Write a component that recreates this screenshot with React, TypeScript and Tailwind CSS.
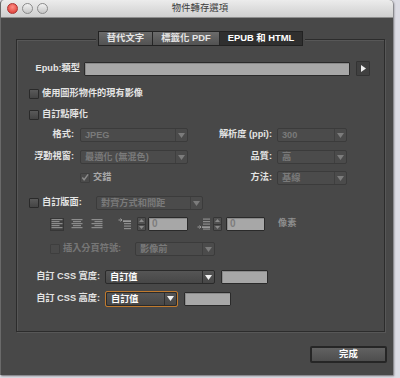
import React from 'react';

const Arrow = ({ light }: { light?: boolean }) => (
  <svg width="7" height="5" viewBox="0 0 7 5">
    <path d="M0 0h7L3.5 5z" fill={light ? '#f2f2f2' : '#7c7c7c'} />
  </svg>
);

interface SelectProps {
  className: string;
  value: string;
  disabled?: boolean;
}

const Select: React.FC<SelectProps> = ({ className, value, disabled = true }) => (
  <div
    className={`${className} h-[14px] flex items-stretch rounded-[2px] border ${
      disabled ? 'border-[#3b3b3b] bg-[#4b4b4b]' : 'border-[#2a2a2a] bg-gradient-to-b from-[#555] to-[#474747]'
    }`}
  >
    <span className={`flex-1 pl-[4px] leading-[12px] whitespace-nowrap overflow-hidden ${disabled ? 'text-[#7a7a7a]' : 'text-white'}`}>
      {value}
    </span>
    <span className={`w-[12px] border-l flex items-center justify-center ${disabled ? 'border-[#3f3f3f]' : 'border-[#2e2e2e]'}`}>
      <Arrow light={!disabled} />
    </span>
  </div>
);

const Field = ({ className, value }: { className: string; value?: string }) => (
  <div className={`${className} h-[14px] bg-[#a7a7a7] border border-[#2a2a2a] rounded-[1px] shadow-[inset_1px_1px_0_#8a8a8a] pl-[3px] leading-[12px] text-[#7d7d7d] text-[10px]`}>
    {value}
  </div>
);

const Checkbox = ({ checked, disabled }: { checked?: boolean; disabled?: boolean }) => (
  <div
    className={`w-[10px] h-[10px] shrink-0 rounded-[1px] border flex items-center justify-center ${
      disabled ? 'border-[#3e3e3e] bg-[#4a4a4a]' : 'border-[#2a2a2a] bg-gradient-to-b from-[#5a5a5a] to-[#444]'
    }`}
  >
    {checked && (
      <svg width="9" height="9" viewBox="0 0 9 9">
        <path d="M1.5 4.5l2 2.5L8 1" stroke="#8a8a8a" strokeWidth="1.6" fill="none" />
      </svg>
    )}
  </div>
);

const AlignIcon = ({ kind, selected }: { kind: 'left' | 'center' | 'right'; selected?: boolean }) => {
  const rows = [0, 1, 2, 3, 4];
  return (
    <div className={`w-[14px] h-[13px] flex items-center justify-center ${selected ? 'bg-[#404040] border border-[#363636]' : ''}`}>
      <svg width="12" height="10" viewBox="0 0 12 10">
        {rows.map(i => {
          const w = i % 2 === 0 ? 11 : 8;
          const x = kind === 'left' ? 0.5 : kind === 'center' ? (12 - w) / 2 : 11.5 - w;
          return <rect key={i} x={x} y={i * 2} width={w} height="1.2" fill="#8c8c8c" />;
        })}
      </svg>
    </div>
  );
};

const SpaceIcon = ({ below }: { below?: boolean }) => (
  <div className="w-[14px] h-[13px] flex items-center justify-center">
    <svg width="14" height="12" viewBox="0 0 14 12">
      {below ? (
        <>
          <path d="M0.5 9h3M2.5 7.5l1.5 1.5-1.5 1.5" stroke="#9a9a9a" strokeWidth="1" fill="none" />
          <rect x="6" y="0.5" width="7" height="1.2" fill="#8c8c8c" />
          <rect x="6" y="3" width="7" height="1.2" fill="#8c8c8c" />
          <rect x="6" y="5.5" width="7" height="1.2" fill="#8c8c8c" />
          <rect x="5" y="8.5" width="8" height="1.2" fill="#bcbcbc" />
          <rect x="6" y="10.5" width="7" height="1.2" fill="#8c8c8c" />
        </>
      ) : (
        <>
          <path d="M0.5 2h3M2.5 0.5l1.5 1.5-1.5 1.5" stroke="#9a9a9a" strokeWidth="1" fill="none" />
          <rect x="5" y="2.5" width="8" height="1.2" fill="#bcbcbc" />
          <rect x="6" y="5" width="7" height="1.2" fill="#8c8c8c" />
          <rect x="6" y="7.5" width="7" height="1.2" fill="#8c8c8c" />
          <rect x="6" y="10" width="7" height="1.2" fill="#8c8c8c" />
        </>
      )}
    </svg>
  </div>
);

const Stepper = ({ className }: { className: string }) => (
  <div className={`${className} h-[14px] flex flex-col border border-[#363636] rounded-[1px]`}>
    <div className="flex-1 flex items-center justify-center bg-[#505050] border-b border-[#363636]">
      <svg width="5" height="3" viewBox="0 0 5 3"><path d="M0 3h5L2.5 0z" fill="#8a8a8a" /></svg>
    </div>
    <div className="flex-1 flex items-center justify-center bg-[#505050]">
      <svg width="5" height="3" viewBox="0 0 5 3"><path d="M0 0h5L2.5 3z" fill="#8a8a8a" /></svg>
    </div>
  </div>
);

const Tab = ({ label, active }: { label: string; active?: boolean }) => (
  <div
    className={`h-full flex items-center justify-center px-[8px] border-r border-[#262626] last:border-r-0 ${
      active ? 'bg-[#2f2f2f] text-white' : 'bg-gradient-to-b from-[#6b6b6b] to-[#525252] text-[#e6e6e6]'
    }`}
  >
    {label}
  </div>
);

const Light = ({ color }: { color: string }) => (
  <div className={`w-[11px] h-[11px] rounded-full border border-[#8a8a8a] ${color}`} />
);

export default function App() {
  return (
    <div className="w-[400px] h-[378px] bg-[#dcdce4] overflow-hidden font-['Liberation_Sans','Noto_Sans_CJK_TC',sans-serif] text-[9.2px] font-bold text-[#e4e4e4]">
      <div className="w-[393px] h-[375px] bg-[#484848] flex flex-col rounded-t-[4px] overflow-hidden border-l border-[#6a6a6a] shadow-[1px_1px_2px_rgba(0,0,0,0.5)]">
        {/* title bar */}
        <div className="h-[18px] shrink-0 relative flex items-center bg-gradient-to-b from-[#ececec] to-[#cfcfcf] border-b border-[#8d8d8d]">
          <div className="flex items-center gap-[4px] pl-[6px]">
            <div className="w-[11px] h-[11px] rounded-full border border-[#a33] bg-[radial-gradient(circle_at_50%_35%,#ff8f86,#d8312a)]" />
            <Light color="bg-gradient-to-b from-[#f2f2f2] to-[#c6c6c6]" />
            <Light color="bg-gradient-to-b from-[#f2f2f2] to-[#c6c6c6]" />
          </div>
          <div className="absolute inset-0 flex items-center justify-center font-normal text-[#3a3a3a] text-[9.4px] pl-[6px]">物件轉存選項</div>
        </div>

        {/* group box */}
        <div className="ml-[15px] mt-[21px] w-[369px] h-[293px] border border-[#2c2c2c] shadow-[inset_1px_1px_0_#575757,1px_1px_0_#575757] flex flex-col">
          <div className="-mt-[9px] h-[15px] flex justify-center">
            <div className="h-[15px] flex border border-[#222] bg-[#2f2f2f] shadow-[0_0_0_2px_#484848] text-[9.4px]">
              <Tab label="替代文字" />
              <Tab label="標籤化 PDF" />
              <Tab label="EPUB 和 HTML" active />
            </div>
          </div>

          <div className="mt-[15px] h-[15px] flex items-center">
            <div className="w-[63px] text-right">Epub:類型</div>
            <Field className="ml-[4px] w-[266px]" />
            <div className="ml-[6px] w-[14px] h-[15px] flex items-center justify-center bg-[#404040] border border-[#333] rounded-[1px]">
              <svg width="5" height="7" viewBox="0 0 5 7"><path d="M0 0v7l5-3.5z" fill="#f0f0f0" /></svg>
            </div>
          </div>

          <div className="mt-[11px] h-[14px] ml-[12px] flex items-center">
            <Checkbox />
            <span className="ml-[3px]">使用圖形物件的現有影像</span>
          </div>

          <div className="mt-[7px] h-[14px] ml-[12px] flex items-center">
            <Checkbox />
            <span className="ml-[3px]">自訂點陣化</span>
          </div>

          <div className="mt-[6px] h-[14px] flex items-center">
            <div className="w-[57px] text-right">格式:</div>
            <Select className="ml-[6px] w-[108px]" value="JPEG" />
            <div className="w-[84px] text-right">解析度 (ppi):</div>
            <Select className="ml-[5px] w-[70px]" value="300" />
          </div>

          <div className="mt-[8px] h-[14px] flex items-center">
            <div className="w-[57px] text-right">浮動視窗:</div>
            <Select className="ml-[6px] w-[108px]" value="最適化 (無混色)" />
            <div className="w-[84px] text-right">品質:</div>
            <Select className="ml-[5px] w-[70px]" value="高" />
          </div>

          <div className="mt-[7px] h-[14px] flex items-center">
            <div className="w-[171px] pl-[63px] flex items-center">
              <Checkbox checked disabled />
              <span className="ml-[3px] text-[#a9a9a9]">交錯</span>
            </div>
            <div className="w-[84px] text-right">方法:</div>
            <Select className="ml-[5px] w-[70px]" value="基線" />
          </div>

          <div className="mt-[11px] h-[14px] flex items-center">
            <div className="ml-[12px] w-[67px] flex items-center">
              <Checkbox />
              <span className="ml-[3px]">自訂版面:</span>
            </div>
            <Select className="w-[107px]" value="對齊方式和間距" />
          </div>

          <div className="mt-[7px] h-[14px] flex items-center">
            <div className="ml-[33px]"><AlignIcon kind="left" selected /></div>
            <div className="ml-[6px]"><AlignIcon kind="center" /></div>
            <div className="ml-[6px]"><AlignIcon kind="right" /></div>
            <div className="ml-[14px]"><SpaceIcon /></div>
            <Stepper className="ml-[5px] w-[9px]" />
            <Field className="ml-[2px] w-[40px]" value="0" />
            <div className="ml-[9px]"><SpaceIcon below /></div>
            <Stepper className="ml-[2px] w-[9px]" />
            <Field className="ml-[4px] w-[39px]" value="0" />
            <span className="ml-[13px] text-[#8e8e8e]">像素</span>
          </div>

          <div className="mt-[11px] h-[14px] flex items-center">
            <div className="ml-[33px] w-[85px] flex items-center">
              <Checkbox disabled />
              <span className="ml-[3px] text-[#777]">插入分頁符號:</span>
            </div>
            <Select className="w-[80px]" value="影像前" />
          </div>

          <div className="mt-[14px] h-[14px] flex items-center">
            <div className="w-[83px] text-right">自訂 CSS 寬度:</div>
            <Select className="ml-[5px] w-[110px]" value="自訂值" disabled={false} />
            <Field className="ml-[6px] w-[47px]" />
          </div>

          <div className="mt-[7px] h-[15px] flex items-center">
            <div className="w-[83px] text-right">自訂 CSS 高度:</div>
            <div className="ml-[5px] w-[73px] h-[16px] border border-[#c07a2e] rounded-[2px] flex">
              <Select className="w-full" value="自訂值" disabled={false} />
            </div>
            <Field className="ml-[6px] w-[47px]" />
          </div>
        </div>

        <div className="mt-[14px] ml-[309px] w-[77px] h-[17px] border-2 border-[#262626] rounded-[2px] bg-gradient-to-b from-[#616161] to-[#4e4e4e] flex items-center justify-center text-white text-[9.4px]">
          完成
        </div>
      </div>
    </div>
  );
}
